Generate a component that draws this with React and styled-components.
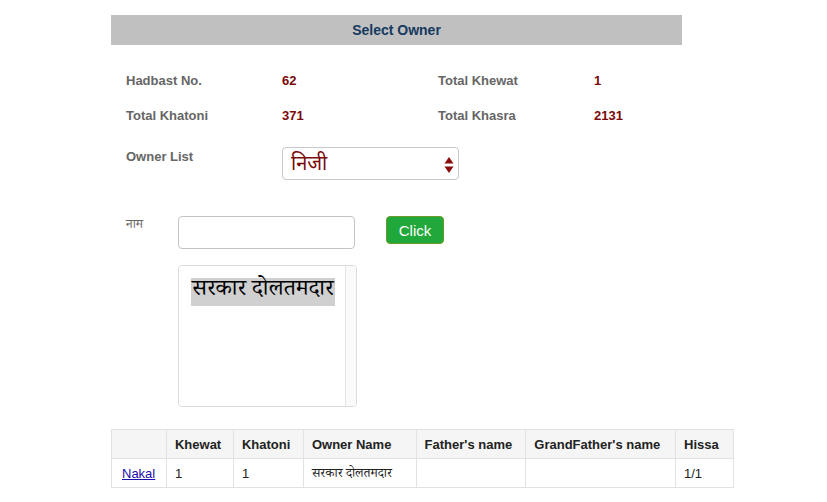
import React, { useState } from 'react';
import styled, { createGlobalStyle } from 'styled-components';

const GlobalStyle = createGlobalStyle`
    body {
        margin: 0;
        background: #ffffff;
        font-family: "Liberation Sans", Arial, sans-serif;
    }
`;

const Page = styled.div`
    padding: 15px 0 0 111px;
`;

const Panel = styled.div`
    width: 571px;
`;

const TitleBar = styled.div`
    height: 30px;
    background: #c0c0c0;
    display: flex;
    align-items: center;
    justify-content: center;
    font-size: 14px;
    font-weight: bold;
    color: #15395f;
`;

const InfoGrid = styled.div`
    display: grid;
    grid-template-columns: 156px 156px 156px 1fr;
    row-gap: 15px;
    margin-top: 26px;
    padding-left: 15px;
    line-height: 20px;
    font-size: 13px;
    font-weight: bold;
`;

const Label = styled.div`
    color: #666666;
`;

const Value = styled.div`
    color: #7a0a0a;
`;

const FieldRow = styled.div`
    display: flex;
    align-items: flex-start;
    padding-left: 15px;
    margin-top: ${({ top }) => top}px;
`;

const FieldLabel = styled.div`
    width: ${({ w }) => w}px;
    flex-shrink: 0;
    color: #666666;
    font-size: 13px;
    font-weight: ${({ deva }) => (deva ? 'normal' : 'bold')};
    font-family: ${({ deva }) => (deva ? '"Noto Serif Devanagari", "Noto Sans Devanagari", serif' : 'inherit')};
    line-height: 20px;
`;

const SelectBox = styled.div`
    width: 177px;
    height: 33px;
    box-sizing: border-box;
    border: 1px solid #c8c8c8;
    border-radius: 4px;
    display: flex;
    align-items: center;
    justify-content: space-between;
    padding: 3px 4px 0 8px;
    color: #7a0a0a;
    font-size: 20px;
    font-family: "Noto Sans Devanagari", "Noto Serif Devanagari", sans-serif;
`;

const TextInput = styled.input`
    width: 177px;
    height: 33px;
    box-sizing: border-box;
    border: 1px solid #c4c4c4;
    border-radius: 4px;
    outline: none;
    margin: 0;
`;

const GreenButton = styled.button`
    margin-left: 31px;
    width: 58px;
    height: 28px;
    background: #21a83a;
    border: 1px solid #6c9a2a;
    border-radius: 4px;
    color: #ffffff;
    font-family: "Liberation Sans", Arial, sans-serif;
    font-size: 15px;
    padding: 0;
`;

const ListBox = styled.div`
    margin: 16px 0 0 67px;
    width: 179px;
    height: 142px;
    box-sizing: border-box;
    border: 1px solid #dcdcdc;
    border-radius: 4px;
    display: flex;
    overflow: hidden;
`;

const ListItems = styled.div`
    flex: 1;
    padding: 12px 0 0 12px;
`;

const Option = styled.div`
    display: inline-block;
    background: ${({ selected }) => (selected ? '#d0d0d0' : 'transparent')};
    color: #000000;
    font-size: 23px;
    line-height: 28px;
    padding: 0 1px;
    font-family: "Noto Serif Devanagari", "Noto Sans Devanagari", serif;
`;

const Track = styled.div`
    width: 10px;
    border-left: 1px solid #e4e4e4;
    background: #fafafa;
`;

const Table = styled.table`
    margin-top: 22px;
    border-collapse: collapse;
    width: 623px;
    font-size: 13px;
    color: #222222;
`;

const Th = styled.th`
    width: ${({ w }) => w}px;
    height: 29px;
    box-sizing: border-box;
    padding: 0 8px;
    text-align: left;
    font-weight: bold;
    background: #f5f5f5;
    border: 1px solid #e2e2e2;
`;

const Td = styled.td`
    height: 29px;
    box-sizing: border-box;
    padding: ${({ deva }) => (deva ? '3px 8px 0' : '0 8px')};
    border: 1px solid #e2e2e2;
    vertical-align: middle;
    font-family: ${({ deva }) => (deva ? '"Noto Serif Devanagari", "Noto Sans Devanagari", serif' : 'inherit')};
`;

const NakalLink = styled.a`
    color: #1a0dab;
    text-decoration: underline;
    margin-left: 2px;
`;

const Arrows = () => (
    <svg width="10" height="20" viewBox="0 0 10 20">
        <path d="M5 2 L9.5 8.5 L0.5 8.5 Z" fill="#8a0b0b" />
        <path d="M5 18 L9.5 11.5 L0.5 11.5 Z" fill="#8a0b0b" />
    </svg>
);

const columns = [
    { title: '', w: 55 },
    { title: 'Khewat', w: 67 },
    { title: 'Khatoni', w: 70 },
    { title: 'Owner Name', w: 113 },
    { title: "Father's name", w: 110 },
    { title: "GrandFather's name", w: 150 },
    { title: 'Hissa', w: 58 },
];

const App = () => {
    const [name, setName] = useState('');

    return (
        <>
            <GlobalStyle />
            <Page>
                <Panel>
                    <TitleBar>Select Owner</TitleBar>
                    <InfoGrid>
                        <Label>Hadbast No.</Label>
                        <Value>62</Value>
                        <Label>Total Khewat</Label>
                        <Value>1</Value>
                        <Label>Total Khatoni</Label>
                        <Value>371</Value>
                        <Label>Total Khasra</Label>
                        <Value>2131</Value>
                    </InfoGrid>
                    <FieldRow top={21}>
                        <FieldLabel w={156}>Owner List</FieldLabel>
                        <SelectBox>
                            <span>निजी</span>
                            <Arrows />
                        </SelectBox>
                    </FieldRow>
                    <FieldRow top={36}>
                        <FieldLabel w={52} deva>नाम</FieldLabel>
                        <TextInput value={name} onChange={(e) => setName(e.target.value)} />
                        <GreenButton>Click</GreenButton>
                    </FieldRow>
                    <ListBox>
                        <ListItems>
                            <Option selected>सरकार दोलतमदार</Option>
                        </ListItems>
                        <Track />
                    </ListBox>
                </Panel>
                <Table>
                    <thead>
                        <tr>
                            {columns.map((c, i) => (
                                <Th key={i} w={c.w}>{c.title}</Th>
                            ))}
                        </tr>
                    </thead>
                    <tbody>
                        <tr>
                            <Td><NakalLink href="#">Nakal</NakalLink></Td>
                            <Td>1</Td>
                            <Td>1</Td>
                            <Td deva>सरकार दोलतमदार</Td>
                            <Td></Td>
                            <Td></Td>
                            <Td>1/1</Td>
                        </tr>
                    </tbody>
                </Table>
            </Page>
        </>
    );
};

export default App;
